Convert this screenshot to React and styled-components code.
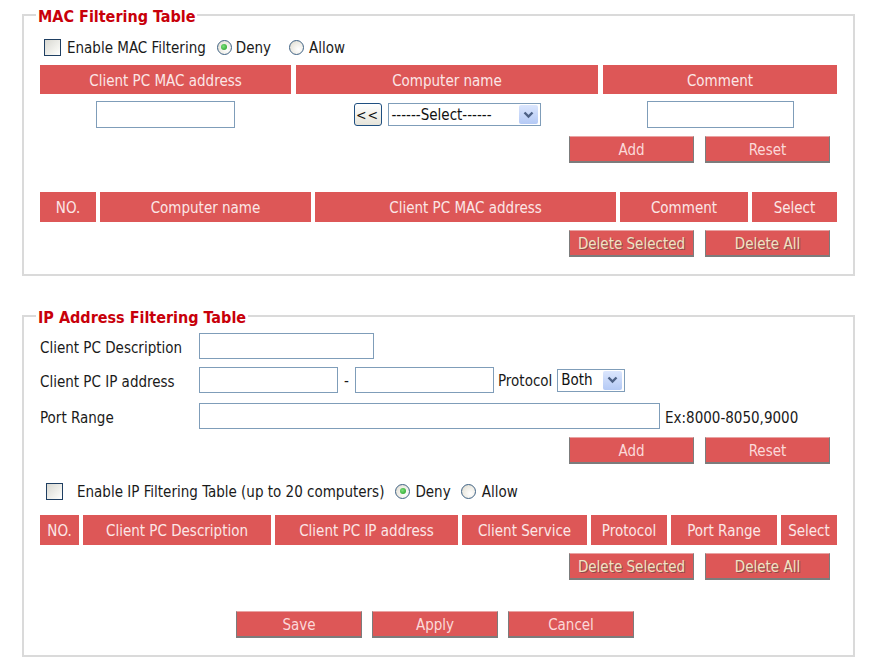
import React from 'react';
import styled, { createGlobalStyle } from 'styled-components';

const GlobalStyle = createGlobalStyle`
  html, body {
    margin: 0;
    padding: 0;
    background: #ffffff;
  }
  body {
    font-family: "DejaVu Sans Condensed", "DejaVu Sans", sans-serif;
    font-stretch: condensed;
    font-size: 15px;
    color: #1a1a1a;
  }
`;

const Page = styled.div`
  width: 833px;
  padding: 4px 0 0 22px;
`;

const Fieldset = styled.fieldset`
  margin: 0 0 ${p => p.$gap || 0}px 0;
  padding: 0 16px ${p => p.$bottom || 17}px;
  border: 2px solid #dadada;
  min-width: 0;
  box-sizing: border-box;
  width: 833px;
`;

const Legend = styled.legend`
  margin-left: -4px;
  padding: 4px 2px 0;
  font-size: 16px;
  line-height: 18px;
  font-weight: bold;
  color: #c8000a;
`;

const OptionRow = styled.div`
  display: flex;
  align-items: center;
  height: 20px;
  margin-top: ${p => p.$top}px;
  padding-left: ${p => p.$indent || 0}px;
`;

const Check = styled.span`
  display: inline-block;
  width: 15px;
  height: 15px;
  border: 1px solid #1f3f62;
  background: linear-gradient(135deg, #d8d8d2 0%, #f4f4f0 70%, #ffffff 100%);
  margin-right: ${p => p.$gap}px;
`;

const Radio = styled.span`
  position: relative;
  display: inline-block;
  flex: none;
  width: 15px;
  height: 15px;
  border-radius: 50%;
  border: 1px solid #3f6284;
  background: radial-gradient(circle at 65% 65%, #ffffff 0%, #eceae2 60%, #d4d2c8 100%);
  margin: 0 ${p => p.$right || 5}px 0 ${p => p.$left}px;
  box-sizing: border-box;

  &::after {
    content: '';
    display: ${p => (p.$on ? 'block' : 'none')};
    position: absolute;
    left: 3.5px;
    top: 3.5px;
    width: 6px;
    height: 6px;
    border-radius: 50%;
    background: radial-gradient(circle at 40% 40%, #7be07b, #1f9a1f);
  }
`;

const OptionText = styled.span`
  color: #1a1a1a;
  padding-top: 2px;
`;

const HeadGrid = styled.div`
  display: grid;
  grid-template-columns: ${p => p.$cols};
  column-gap: ${p => p.$gap || 4}px;
  height: ${p => p.$h || 30}px;
  margin-top: ${p => p.$top}px;
`;

const HeadCell = styled.div`
  background: #dd5757;
  color: #fbe6e6;
  display: flex;
  align-items: center;
  justify-content: center;
  white-space: nowrap;
  padding-top: 2px;
`;

const EntryGrid = styled.div`
  display: grid;
  grid-template-columns: 251px 302px 234px;
  column-gap: 5px;
  margin-top: 7px;
  height: 27px;
  align-items: center;
  justify-items: center;
`;

const TextBox = styled.div`
  flex: none;
  width: ${p => p.$w}px;
  height: ${p => p.$h || 26}px;
  border: 1px solid #7f9db9;
  background: #fff;
  box-sizing: border-box;
`;

const Picker = styled.div`
  display: flex;
  align-items: center;
  gap: 6px;
`;

const BackBtn = styled.div`
  width: 28px;
  height: 23px;
  box-sizing: border-box;
  border: 1px solid #1f4f80;
  border-radius: 3px;
  background: linear-gradient(#ffffff, #e6e4da);
  display: flex;
  align-items: center;
  justify-content: center;
  font-size: 14px;
  letter-spacing: 1px;
  color: #111;
`;

const SelectBox = styled.div`
  flex: none;
  width: ${p => p.$w}px;
  height: 23px;
  box-sizing: border-box;
  border: 1px solid #7f9db9;
  background: #fff;
  display: flex;
  align-items: center;
  justify-content: space-between;
  padding: 1px 2px 1px 3px;
  color: #111;
`;

const ArrowBox = styled.span`
  width: 19px;
  height: 19px;
  border-radius: 2px;
  background: linear-gradient(#dbe6fd, #b4c9f5);
  display: flex;
  align-items: center;
  justify-content: center;
`;

const ButtonRow = styled.div`
  display: flex;
  justify-content: ${p => (p.$center ? 'center' : 'flex-end')};
  gap: ${p => p.$gap || 11}px;
  margin-top: ${p => p.$top}px;
  padding-right: 7px;
`;

const RedButton = styled.div`
  width: ${p => p.$w || 125}px;
  height: 27px;
  box-sizing: border-box;
  background: #dd5757;
  border: 1px solid #7c7c7c;
  border-top-color: #e9a3a3;
  border-bottom-width: 2px;
  display: flex;
  align-items: center;
  justify-content: center;
  padding-top: 2px;
  color: ${p => (p.$dim ? '#efe2c4' : '#fbd9d9')};
  text-shadow: ${p => (p.$dim ? '1px 1px 0 #8e4a4a' : 'none')};
`;

const FormRow = styled.div`
  display: flex;
  align-items: center;
  height: 26px;
  margin-top: ${p => p.$top}px;
`;

const Label = styled.div`
  width: 159px;
  flex: none;
  padding-top: 3px;
`;

const Dash = styled.span`
  width: 17px;
  text-align: center;
  padding-top: 2px;
`;

const Inline = styled.span`
  margin: 0 5px 0 4px;
  padding-top: 2px;
`;

const Hint = styled.span`
  margin-left: 5px;
  padding-top: 3px;
`;

function Chevron() {
  return (
    <svg width="11" height="8" viewBox="0 0 11 8">
      <path d="M1.5 1.5 L5.5 5.5 L9.5 1.5" fill="none" stroke="#4d6185" strokeWidth="2.4" />
    </svg>
  );
}

const macHead = ['Client PC MAC address', 'Computer name', 'Comment'];
const macList = ['NO.', 'Computer name', 'Client PC MAC address', 'Comment', 'Select'];
const ipList = ['NO.', 'Client PC Description', 'Client PC IP address', 'Client Service', 'Protocol', 'Port Range', 'Select'];

export default function App() {
  return (
    <Page>
      <GlobalStyle />
      <Fieldset $gap={29}>
        <Legend>MAC Filtering Table</Legend>
        <OptionRow $top={11} $indent={4}>
          <Check $gap={6} />
          <OptionText>Enable MAC Filtering</OptionText>
          <Radio $on $left={11} $right={4} />
          <OptionText>Deny</OptionText>
          <Radio $left={18} />
          <OptionText>Allow</OptionText>
        </OptionRow>

        <HeadGrid $cols="251px 302px 234px" $gap={5} $top={8} $h={29}>
          {macHead.map(h => <HeadCell key={h}>{h}</HeadCell>)}
        </HeadGrid>

        <EntryGrid>
          <TextBox $w={139} $h={27} />
          <Picker>
            <BackBtn>&lt;&lt;</BackBtn>
            <SelectBox $w={153}>
              <span>------Select------</span>
              <ArrowBox><Chevron /></ArrowBox>
            </SelectBox>
          </Picker>
          <TextBox $w={147} $h={27} />
        </EntryGrid>

        <ButtonRow $top={8}>
          <RedButton>Add</RedButton>
          <RedButton>Reset</RedButton>
        </ButtonRow>

        <HeadGrid $cols="56px 211px 301px 128px 85px" $top={29}>
          {macList.map(h => <HeadCell key={h}>{h}</HeadCell>)}
        </HeadGrid>

        <ButtonRow $top={8}>
          <RedButton $dim>Delete Selected</RedButton>
          <RedButton $dim>Delete All</RedButton>
        </ButtonRow>
      </Fieldset>

      <Fieldset>
        <Legend>IP Address Filtering Table</Legend>
        <FormRow $top={6}>
          <Label>Client PC Description</Label>
          <TextBox $w={175} />
        </FormRow>
        <FormRow $top={8}>
          <Label>Client PC IP address</Label>
          <TextBox $w={139} />
          <Dash>-</Dash>
          <TextBox $w={139} />
          <Inline>Protocol</Inline>
          <SelectBox $w={68}>
            <span>Both</span>
            <ArrowBox><Chevron /></ArrowBox>
          </SelectBox>
        </FormRow>
        <FormRow $top={10}>
          <Label>Port Range</Label>
          <TextBox $w={461} />
          <Hint>Ex:8000-8050,9000</Hint>
        </FormRow>

        <ButtonRow $top={8}>
          <RedButton>Add</RedButton>
          <RedButton>Reset</RedButton>
        </ButtonRow>

        <OptionRow $top={17} $indent={6}>
          <Check $gap={14} />
          <OptionText>Enable IP Filtering Table (up to 20 computers)</OptionText>
          <Radio $on $left={11} />
          <OptionText>Deny</OptionText>
          <Radio $left={10} $right={6} />
          <OptionText>Allow</OptionText>
        </OptionRow>

        <HeadGrid $cols="39px 188px 183px 125px 76px 106px 56px" $top={14}>
          {ipList.map(h => <HeadCell key={h}>{h}</HeadCell>)}
        </HeadGrid>

        <ButtonRow $top={8}>
          <RedButton $dim>Delete Selected</RedButton>
          <RedButton $dim>Delete All</RedButton>
        </ButtonRow>

        <ButtonRow $center $gap={10} $top={31}>
          <RedButton $w={126}>Save</RedButton>
          <RedButton $w={126}>Apply</RedButton>
          <RedButton $w={126}>Cancel</RedButton>
        </ButtonRow>
      </Fieldset>
    </Page>
  );
}
